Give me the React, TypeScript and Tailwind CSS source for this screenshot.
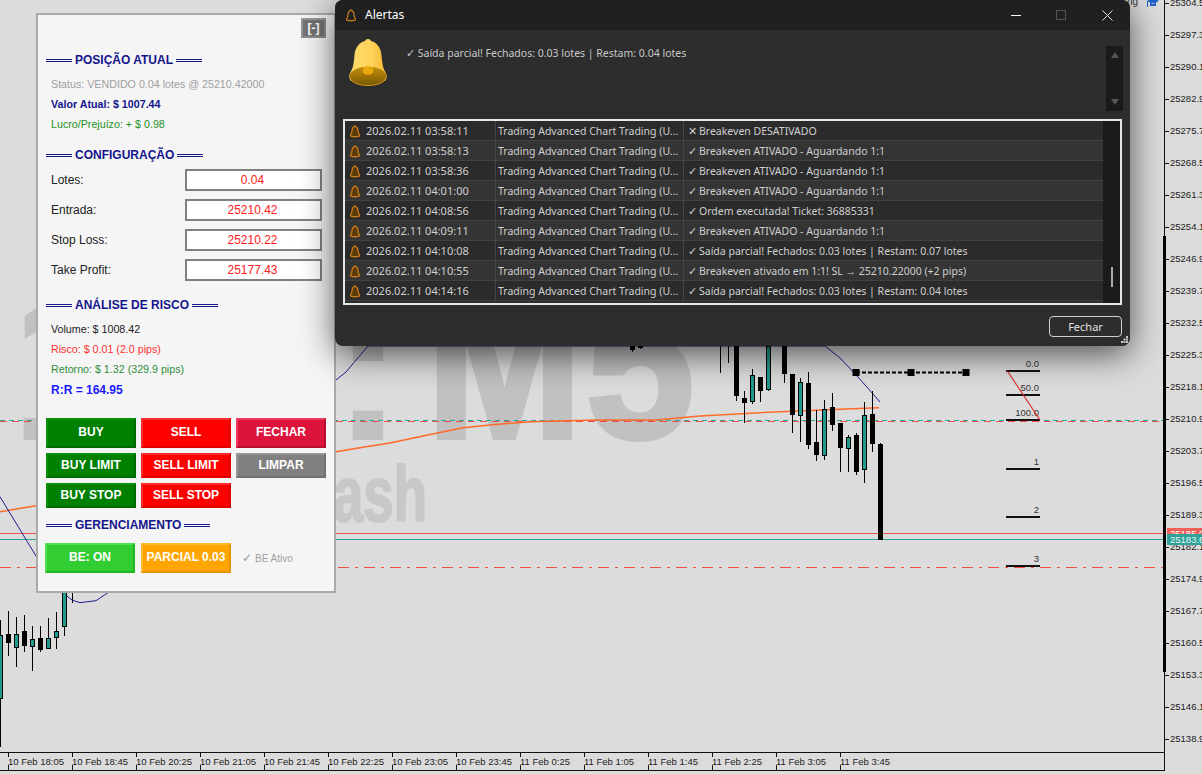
const FONT_ARIAL = "font-['Liberation_Sans',sans-serif]";

// x, wick top, wick bottom, body top, body bottom, teal?
const candles: [number, number, number, number, number, boolean][] = [
  [0, 620, 747, 635, 699, true],
  [8, 611, 656, 634, 643, false],
  [16, 617, 667, 634, 648, true],
  [24, 615, 652, 631, 646, false],
  [32, 626, 671, 639, 647, true],
  [40, 626, 652, 638, 650, false],
  [48, 618, 649, 638, 649, true],
  [56, 612, 649, 631, 638, true],
  [64, 585, 636, 592, 627, true],
  [632, 346, 352, 346, 350, false],
  [640, 346, 349, 346, 348, true],
  [736, 346, 401, 346, 396, false],
  [744, 391, 423, 398, 403, false],
  [752, 369, 404, 375, 402, true],
  [760, 377, 402, 377, 391, false],
  [768, 346, 391, 346, 390, true],
  [784, 346, 383, 346, 374, false],
  [792, 374, 433, 374, 415, false],
  [800, 378, 442, 382, 416, true],
  [808, 372, 449, 383, 445, false],
  [816, 410, 461, 442, 455, false],
  [824, 400, 460, 409, 456, true],
  [832, 393, 431, 407, 425, false],
  [840, 423, 472, 423, 448, false],
  [848, 435, 472, 437, 449, true],
  [856, 433, 475, 435, 472, false],
  [864, 402, 483, 415, 470, true],
  [872, 391, 452, 414, 444, false],
  [880, 443, 540, 444, 540, false],
];

const wicksOnly: [number, number, number][] = [
  [72, 590, 603],
  [720, 346, 373],
  [728, 346, 363],
];

const prices = [
  "25304.5", "25297.3", "25290.1", "25282.9", "25275.7", "25268.5", "25261.3", "25254.1",
  "25246.9", "25239.7", "25232.5", "25225.3", "25218.1", "25210.9", "25203.7", "25196.5",
  "25189.3", "25182.1", "25174.9", "25167.7", "25160.5", "25153.3", "25146.1", "25138.9",
];

const times = [
  "10 Feb 18:05", "10 Feb 18:45", "10 Feb 20:25", "10 Feb 21:05", "10 Feb 21:45", "10 Feb 22:25", "10 Feb 23:05",
  "10 Feb 23:45", "11 Feb 0:25", "11 Feb 1:05", "11 Feb 1:45", "11 Feb 2:25", "11 Feb 3:05", "11 Feb 3:45",
];

const fibs: [string, number][] = [
  ["0.0", 370],
  ["50.0", 394],
  ["100.0", 419],
  ["1", 468],
  ["2", 516],
  ["3", 565],
];

const alerts: [string, string, string][] = [
  ["2026.02.11 03:58:11", "✕", "Breakeven DESATIVADO"],
  ["2026.02.11 03:58:13", "✓", "Breakeven ATIVADO - Aguardando 1:1"],
  ["2026.02.11 03:58:36", "✓", "Breakeven ATIVADO - Aguardando 1:1"],
  ["2026.02.11 04:01:00", "✓", "Breakeven ATIVADO - Aguardando 1:1"],
  ["2026.02.11 04:08:56", "✓", "Ordem executada! Ticket: 36885331"],
  ["2026.02.11 04:09:11", "✓", "Breakeven ATIVADO - Aguardando 1:1"],
  ["2026.02.11 04:10:08", "✓", "Saída parcial! Fechados: 0.03 lotes | Restam: 0.07 lotes"],
  ["2026.02.11 04:10:55", "✓", "Breakeven ativado em 1:1! SL → 25210.22000 (+2 pips)"],
  ["2026.02.11 04:14:16", "✓", "Saída parcial! Fechados: 0.03 lotes | Restam: 0.04 lotes"],
];

function Chart() {
  return (
    <svg width={1202} height={774} className={`absolute left-0 top-0 ${FONT_ARIAL}`}>
      {/* watermark */}
      <g fill="#c1c1c1" fontWeight="bold" fontSize={216}>
        <text transform="translate(10,440)">1</text>
        <text transform="translate(332,440)">:</text>
        <g stroke="#c1c1c1" strokeWidth={6}>
          <text transform="translate(427,437) scale(0.86,1)">M</text>
          <text transform="translate(586,437) scale(0.9,1)">5</text>
        </g>
        <text transform="translate(427,521) scale(0.7,1)" fontSize={78} textAnchor="end" fill="#c8c8c8" stroke="#c8c8c8" strokeWidth={2}>ash</text>
      </g>

      {/* price lines */}
      <line x1={0} x2={1164} y1={421.5} y2={421.5} stroke="#ee5048" strokeDasharray="7 5" />
      <line x1={0} x2={1164} y1={420.5} y2={420.5} stroke="#2aa79b" strokeDasharray="5 4" />
      <line x1={0} x2={1164} y1={533.5} y2={533.5} stroke="#e8524c" />
      <line x1={0} x2={1164} y1={539.5} y2={539.5} stroke="#2fa398" />
      <line x1={0} x2={1164} y1={567.5} y2={567.5} stroke="#ee5048" strokeDasharray="11 6 3 6" />

      {/* moving averages */}
      <polyline
        fill="none"
        stroke="#ff6a2a"
        strokeWidth={1.5}
        points="0,511.7 36,505.7 336,451.7 366,446.7 390,443 423,436 463,427.7 490,425 530,421.7 597,420 656,420 700,416 760,412.7 846,409 879,407.7"
      />
      <polyline
        fill="none"
        stroke="#1f1f8f"
        strokeWidth={1}
        points="0,496.7 36,556 63,593 72,600 80,602.7 96,600.7 108,592.7 336,380 346,372 368,346 825,346 840,358 853,371.7 866,386 880,402"
      />

      {/* candles */}
      <g shapeRendering="crispEdges">
        {wicksOnly.map(([x, a, b]) => (
          <rect key={x} x={x} y={a} width={1} height={b - a} fill="#000" />
        ))}
        {candles.map(([x, wt, wb, bt, bb, teal]) => (
          <g key={x}>
            <rect x={x} y={wt} width={1} height={wb - wt} fill="#000" />
            {teal ? (
              <rect x={x - 1.5} y={bt + 0.5} width={4} height={bb - bt - 1} fill="#1f9a8c" stroke="#000" />
            ) : (
              <rect x={x - 2} y={bt} width={5} height={bb - bt} fill="#000" />
            )}
          </g>
        ))}
      </g>

      {/* dashed segment */}
      <line x1={856} x2={966} y1={372.5} y2={372.5} stroke="#000" strokeWidth={2} strokeDasharray="4 2" />
      {[856, 911, 966].map((x) => (
        <rect key={x} x={x - 3.5} y={369} width={7} height={7} fill="#000" />
      ))}

      {/* fibonacci levels */}
      {fibs.map(([label, y]) => (
        <g key={label}>
          <rect x={1006} y={y} width={34} height={2} fill="#111" shapeRendering="crispEdges" />
          <text x={1039} y={y - 3} fontSize={9.5} textAnchor="end" fill="#333">{label}</text>
        </g>
      ))}
      <line x1={1007} y1={370.5} x2={1040} y2={420} stroke="#e02828" strokeWidth={1.2} />

      {/* axes */}
      <g shapeRendering="crispEdges">
        <rect x={0} y={752} width={1164} height={1} fill="#111" />
        <rect x={0} y={770} width={1165} height={1} fill="#111" />
        <rect x={1164} y={0} width={1} height={771} fill="#111" />
        <rect x={1163} y={236} width={3} height={436} fill="#000" />
      </g>
      {prices.map((p, i) => {
        const y = 2.5 + i * 32.02;
        return (
          <g key={p}>
            <rect x={1165} y={Math.round(y)} width={4} height={1} fill="#111" shapeRendering="crispEdges" />
            <text x={1170} y={y + 3.5} fontSize={9.5} fill="#222">{p}</text>
          </g>
        );
      })}
      {times.map((t, i) => {
        const x = 8 + i * 64;
        return (
          <g key={t}>
            <rect x={x} y={752} width={1} height={5} fill="#111" shapeRendering="crispEdges" />
            <rect x={x} y={765} width={1} height={5} fill="#111" shapeRendering="crispEdges" />
            <text x={x} y={765} fontSize={9.5} fill="#222">{t}</text>
          </g>
        );
      })}

      {/* price tags */}
      <rect x={1167} y={528} width={35} height={8} fill="#ef5f5a" />
      <text x={1170} y={537} fontSize={9.5} fill="#fff">25185.0</text>
      <rect x={1167} y={534} width={35} height={11} fill="#2fa398" />
      <text x={1170} y={543} fontSize={9.5} fill="#e8f5f3">25183.6</text>

      {/* top-right toolbar remnant */}
      <text x={1127} y={5} fontSize={10} fill="#333">ng</text>
      <path d="M1147 1 L1153 -2 L1159 1 L1153 4 Z M1150 3 L1150 6 L1156 6 L1156 3 Z" fill="#1d5fd0" />
      <rect x={1147} y={1} width={1} height={6} fill="#1d5fd0" />
    </svg>
  );
}

function SectionTitle({ children }: { children: string }) {
  const bar = (
    <span className="flex h-[3px] w-[26px] flex-col justify-between">
      <span className="h-px bg-[#1a1a8c]" />
      <span className="h-px bg-[#1a1a8c]" />
    </span>
  );
  return (
    <div className="flex h-5 items-center gap-[3px] text-xs font-bold text-[#14148c]">
      {bar}
      <span>{children}</span>
      {bar}
    </div>
  );
}

function InfoLine({ className, children }: { className: string; children: string }) {
  return <div className={`flex h-5 items-center pl-[5px] ${className}`}>{children}</div>;
}

function Field({ label, value }: { label: string; value: string }) {
  return (
    <div className="flex h-[30px] items-center pl-[5px] text-xs text-[#222]">
      <span className="w-[134px]">{label}</span>
      <span className="flex h-[22px] w-[137px] items-center justify-center border-2 border-[#808080] bg-white pr-[2px] text-[#ff2020]">
        {value}
      </span>
    </div>
  );
}

function PanelButton({ className, children }: { className: string; children: string }) {
  return (
    <button className={`flex w-[90px] items-center justify-center border-2 pb-[2px] text-xs font-bold text-white ${className}`}>
      {children}
    </button>
  );
}

const GREEN = "bg-[#008000] border-t-[#0a8f0a] border-l-[#0a8f0a] border-r-[#006a00] border-b-[#006a00]";
const RED = "bg-[#ff0000] border-t-[#ff2a2a] border-l-[#ff2a2a] border-r-[#e00000] border-b-[#e00000]";

function Panel() {
  return (
    <div className={`absolute left-9 top-[13px] h-[580px] w-[300px] border-2 border-[#aaaaaa] bg-[#f5f5f5] pl-2 pr-2 pt-[3px] text-[10.7px] ${FONT_ARIAL}`}>
      <div className="flex justify-end">
        <div className="flex h-5 w-[25px] items-center justify-center border-2 border-t-[#969696] border-l-[#969696] border-r-[#8e8e8e] border-b-[#8e8e8e] bg-[#747474] text-xs font-bold text-white">
          [-]
        </div>
      </div>

      <div className="mt-3">
        <SectionTitle>POSIÇÃO ATUAL</SectionTitle>
      </div>
      <div className="mt-1">
        <InfoLine className="text-[#a0a0a0]">Status: VENDIDO 0.04 lotes @ 25210.42000</InfoLine>
        <InfoLine className="font-bold text-[#14148c]">Valor Atual: $ 1007.44</InfoLine>
        <InfoLine className="text-[#1f8f1f]">Lucro/Prejuízo: + $ 0.98</InfoLine>
      </div>

      <div className="mt-[11px]">
        <SectionTitle>CONFIGURAÇÃO</SectionTitle>
      </div>
      <Field label="Lotes:" value="0.04" />
      <Field label="Entrada:" value="25210.42" />
      <Field label="Stop Loss:" value="25210.22" />
      <Field label="Take Profit:" value="25177.43" />

      <div className="mt-[10px]">
        <SectionTitle>ANÁLISE DE RISCO</SectionTitle>
      </div>
      <div className="mt-1">
        <InfoLine className="text-[#222]">Volume: $ 1008.42</InfoLine>
        <InfoLine className="text-[#ff3030]">Risco: $ 0.01 (2.0 pips)</InfoLine>
        <InfoLine className="text-[#2e8f3a]">Retorno: $ 1.32 (329.9 pips)</InfoLine>
        <InfoLine className="mt-px text-xs font-bold text-[#1a1aff]">R:R = 164.95</InfoLine>
      </div>

      <div className="mt-[18px] grid grid-cols-[90px_90px_90px] grid-rows-[30px_25px_25px] gap-[5px]">
        <PanelButton className={GREEN}>BUY</PanelButton>
        <PanelButton className={RED}>SELL</PanelButton>
        <PanelButton className="bg-[#dc143c] border-t-[#f03a5c] border-l-[#f03a5c] border-r-[#b80f30] border-b-[#b80f30]">FECHAR</PanelButton>
        <PanelButton className={GREEN}>BUY LIMIT</PanelButton>
        <PanelButton className={RED}>SELL LIMIT</PanelButton>
        <PanelButton className="bg-[#808080] border-t-[#969696] border-l-[#969696] border-r-[#707070] border-b-[#707070]">LIMPAR</PanelButton>
        <PanelButton className={GREEN}>BUY STOP</PanelButton>
        <PanelButton className={RED}>SELL STOP</PanelButton>
      </div>

      <div className="mt-[7px]">
        <SectionTitle>GERENCIAMENTO</SectionTitle>
      </div>
      <div className="ml-[-1px] mt-2 flex h-[30px] items-stretch">
        <PanelButton className="bg-[#32cd32] border-t-[#50e050] border-l-[#50e050] border-r-[#22b522] border-b-[#22b522]">BE: ON</PanelButton>
        <PanelButton className="ml-[6px] bg-[#ffa500] border-t-[#ffb830] border-l-[#ffb830] border-r-[#e89400] border-b-[#e89400]">PARCIAL 0.03</PanelButton>
        <span className="ml-[11px] flex items-center gap-[3px] text-[10px] text-[#a0a0a0]">
          <span className="text-xs">✓</span> BE Ativo
        </span>
      </div>
    </div>
  );
}

function SmallBell({ fill }: { fill: string }) {
  return (
    <svg width={10} height={13} viewBox="0 0 10 13" className="shrink-0">
      <path
        d="M5 .8 C5.7 .8 6 1.3 6 1.9 C7.6 2.5 8 4 8 5.6 C8 7.6 8.6 8.8 9.4 9.8 C9.8 10.6 9.2 11.2 8.2 11.4 C6.2 11.9 3.8 11.9 1.8 11.4 C.8 11.2 .2 10.6 .6 9.8 C1.4 8.8 2 7.6 2 5.6 C2 4 2.4 2.5 4 1.9 C4 1.3 4.3 .8 5 .8 Z"
        fill={fill}
        stroke="#d0801a"
        strokeWidth={1.2}
      />
    </svg>
  );
}

function BigBell() {
  return (
    <svg width={38} height={48} viewBox="0 0 38 48" className="shrink-0">
      <defs>
        <linearGradient id="bellBody" x1="0" x2="1" y1="0" y2="0">
          <stop offset="0" stopColor="#ffdc6e" />
          <stop offset="0.6" stopColor="#ffd257" />
          <stop offset="1" stopColor="#f2b431" />
        </linearGradient>
        <linearGradient id="bellMouth" x1="0" x2="0" y1="0" y2="1">
          <stop offset="0" stopColor="#c08e0e" />
          <stop offset="1" stopColor="#7c5a00" />
        </linearGradient>
      </defs>
      <path
        d="M19 0 C20.5 0 21.5 .8 22 2 C28 3.5 32 9 32.5 16 C33 24 34.2 30 36.5 33 C38 36 38 40 36 42 L2 42 C0 40 0 36 1.5 33 C3.8 30 5 24 5.5 16 C6 9 10 3.5 16 2 C16.5 .8 17.5 0 19 0 Z"
        fill="url(#bellBody)"
      />
      <ellipse cx={19} cy={37.5} rx={18.5} ry={9.5} fill="#e0a01c" />
      <ellipse cx={19} cy={37} rx={18} ry={9.2} fill="url(#bellMouth)" />
      <ellipse cx={19} cy={31.5} rx={5.5} ry={4.2} fill="#eaa90e" />
    </svg>
  );
}

function AlertWindow() {
  return (
    <div className="absolute left-[335px] top-0 flex h-[346px] w-[795px] flex-col rounded-lg bg-[#2d2d2d] font-['Noto_Sans',sans-serif] text-[10.5px] text-[#cfcfcf] shadow-[0_8px_34px_rgba(0,0,0,0.65)]">
      {/* title bar */}
      <div className="flex h-[30px] shrink-0 items-center rounded-t-lg bg-[#202020] pl-[11px]">
        <SmallBell fill="none" />
        <span className="ml-[9px] text-xs text-white">Alertas</span>
        <div className="ml-auto flex items-center pr-[17px]">
          <span className="h-[1px] w-[10px] bg-white" />
          <span className="ml-[35px] h-[10px] w-[10px] border border-[#555]" />
          <svg width={11} height={11} viewBox="0 0 11 11" className="ml-[36px]">
            <path d="M.5 .5 L10.5 10.5 M10.5 .5 L.5 10.5" stroke="#e8e8e8" strokeWidth={1} />
          </svg>
        </div>
      </div>

      {/* current message */}
      <div className="flex h-[89px] shrink-0 items-start">
        <div className="ml-[14px] mt-[9px]">
          <BigBell />
        </div>
        <span className="ml-[19px] mt-4 text-[#c8c8c8]">✓ Saída parcial! Fechados: 0.03 lotes | Restam: 0.04 lotes</span>
        <div className="ml-auto mr-[7px] mt-4 flex h-[65px] w-[17px] flex-col items-center justify-between bg-[#1a1a1a] py-[6px]">
          <span className="h-0 w-0 border-x-[4px] border-b-[6px] border-x-transparent border-b-[#555]" />
          <span className="h-0 w-0 border-x-[4px] border-t-[6px] border-x-transparent border-t-[#555]" />
        </div>
      </div>

      {/* history */}
      <div className="mx-2 flex h-[186px] shrink-0 border-2 border-[#e8e8e8]">
        <div className="flex-1">
          {alerts.map(([time, mark, text], i) => (
            <div
              key={time}
              className={`grid h-5 grid-cols-[151px_188px_1fr] items-stretch whitespace-nowrap border-b border-[#414141] ${i % 2 === 1 ? "bg-[#343434]" : "bg-[#2b2b2b]"}`}
            >
              <div className="flex items-center border-r border-[#454545] pl-[5px] pt-[2px]">
                <SmallBell fill="#5c3a08" />
                <span className="ml-[6px] text-[11px]">{time}</span>
              </div>
              <div className="flex items-center border-r border-[#454545] pl-[2px] pt-[2px]">Trading Advanced Chart Trading (U...</div>
              <div className="flex items-center gap-[2px] pl-1 pt-[2px]">
                <span>{mark}</span>
                <span>{text}</span>
              </div>
            </div>
          ))}
        </div>
        <div className="w-[17px] bg-[#1a1a1a] pl-2 pt-[146px]">
          <div className="h-5 w-[2px] bg-[#aaaaaa]" />
        </div>
      </div>

      {/* footer */}
      <div className="mr-2 mt-[11px] flex justify-end">
        <button className="h-[21px] w-[73px] rounded border border-[#cfcfcf] bg-[#2d2d2d] pt-px text-[11px] text-[#e0e0e0]">Fechar</button>
      </div>
      <svg width={8} height={8} viewBox="0 0 8 8" className="absolute bottom-[2px] right-[1px]">
        <g fill="#c8c8c8">
          <rect x={5} y={0} width={2} height={2} />
          <rect x={2.5} y={2.5} width={2} height={2} />
          <rect x={5} y={2.5} width={2} height={2} />
          <rect x={0} y={5} width={2} height={2} />
          <rect x={2.5} y={5} width={2} height={2} />
          <rect x={5} y={5} width={2} height={2} />
        </g>
      </svg>
    </div>
  );
}

export default function App() {
  return (
    <div className="relative h-[774px] w-[1202px] overflow-hidden bg-[#dcdcdc]">
      <Chart />
      <Panel />
      <AlertWindow />
    </div>
  );
}
